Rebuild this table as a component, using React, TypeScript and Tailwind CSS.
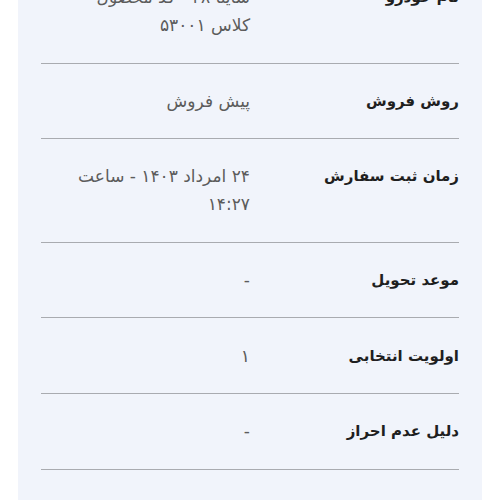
const rows: { label: string; value: string; green?: boolean }[] = [
  { label: 'نام خودرو', value: 'ساینا ۲۸ - کد محصول کلاس ۵۳۰۰۱' },
  { label: 'روش فروش', value: 'پیش فروش' },
  { label: 'زمان ثبت سفارش', value: '۲۴ امرداد ۱۴۰۳ - ساعت ۱۴:۲۷' },
  { label: 'موعد تحویل', value: '-' },
  { label: 'اولویت انتخابی', value: '۱' },
  { label: 'دلیل عدم احراز', value: '-' },
  { label: 'وضعیت', value: 'تایید شده نهایی', green: true },
];

export default function App() {
  return (
    <div
      dir="rtl"
      className="h-[500px] w-[500px] overflow-hidden bg-white"
      style={{ fontFamily: '"DejaVu Sans", "Noto Sans", sans-serif' }}
    >
      <div className="mx-[18px] -mt-[40px] bg-[#f1f4fb] px-[23px]">
        {rows.map((row) => (
          <div
            key={row.label}
            className="grid grid-cols-2 items-start border-b border-[#a9abb0] py-[23.3px] last:border-b-0"
          >
            <div className="text-[15px] font-bold leading-[28px] text-[#1f1f1f]">
              {row.label}
            </div>
            <div
              className={`pl-4 text-[17px] leading-[28px] ${
                row.green ? 'text-[#2e9e4a]' : 'text-[#5c5c5c]'
              }`}
            >
              {row.value}
            </div>
          </div>
        ))}
      </div>
    </div>
  );
}
